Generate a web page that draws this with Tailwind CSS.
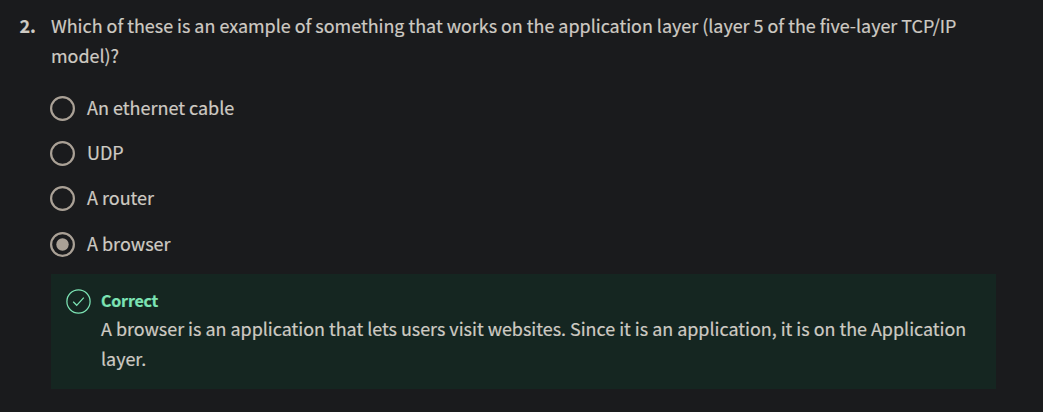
<!DOCTYPE html>
<html lang="en">
<head>
<meta charset="utf-8">
<title>Quiz question</title>
<script src="https://cdn.jsdelivr.net/npm/@tailwindcss/browser@4"></script>
</head>
<body class="bg-[#1a1b1d] font-['Noto_Sans_CJK_SC','Noto_Sans',sans-serif] text-[18px] leading-[30px] text-[#cecac3] [-webkit-text-stroke:0.2px]">
<main class="flex h-[412px] w-[1043px] pt-[10px] pl-[19.5px]">
  <div class="w-[31.5px] shrink-0 font-bold">2.</div>
  <div class="w-[945px]">
    <p class="text-[17.92px] whitespace-nowrap">Which of these is an example of something that works on the application layer (layer 5 of the five-layer TCP/IP<br>model)?</p>
    <div class="-ml-px mt-[22px] flex flex-col gap-[15px]" role="radiogroup">
      <div class="flex h-[30px] items-start gap-[12px]" role="radio" aria-checked="false">
        <svg class="mt-[3.5px] size-[25px]" viewBox="0 0 25 25" fill="none"><circle cx="12.5" cy="12.5" r="11.4" stroke="#aaa196" stroke-width="2.2"/></svg>
        <span>An ethernet cable</span>
      </div>
      <div class="flex h-[30px] items-start gap-[12px]" role="radio" aria-checked="false">
        <svg class="mt-[3.5px] size-[25px]" viewBox="0 0 25 25" fill="none"><circle cx="12.5" cy="12.5" r="11.4" stroke="#aaa196" stroke-width="2.2"/></svg>
        <span>UDP</span>
      </div>
      <div class="flex h-[30px] items-start gap-[12px]" role="radio" aria-checked="false">
        <svg class="mt-[3.5px] size-[25px]" viewBox="0 0 25 25" fill="none"><circle cx="12.5" cy="12.5" r="11.4" stroke="#aaa196" stroke-width="2.2"/></svg>
        <span>A router</span>
      </div>
      <div class="mt-px flex h-[30px] items-start gap-[12px]" role="radio" aria-checked="true">
        <svg class="mt-[3.5px] size-[25px]" viewBox="0 0 25 25" fill="none"><circle cx="12.5" cy="12.5" r="11.4" stroke="#aaa196" stroke-width="2.2"/><circle cx="12.5" cy="12.5" r="6.2" fill="#aaa196"/></svg>
        <span>A browser</span>
      </div>
    </div>
    <section class="mt-[16px] flex h-[115px] gap-[10px] bg-[#152621] pt-[12px] pl-[15px]">
      <svg class="mt-[3px] size-[25px] shrink-0" viewBox="0 0 25 25" fill="none" stroke="#7ce3b4" stroke-width="1.25"><circle cx="12.5" cy="12.5" r="11.6"/><path d="M7.2 12.8 10.7 16.3 17.8 8.6"/></svg>
      <div class="whitespace-nowrap">
        <h2 class="text-[16px] leading-[28px] font-bold tracking-[-0.2px] text-[#7ce3b4]">Correct</h2>
        <p class="-mt-px text-[17.92px]">A browser is an application that lets users visit websites. Since it is an application, it is on the Application<br>layer.</p>
      </div>
    </section>
  </div>
</main>
</body>
</html>
